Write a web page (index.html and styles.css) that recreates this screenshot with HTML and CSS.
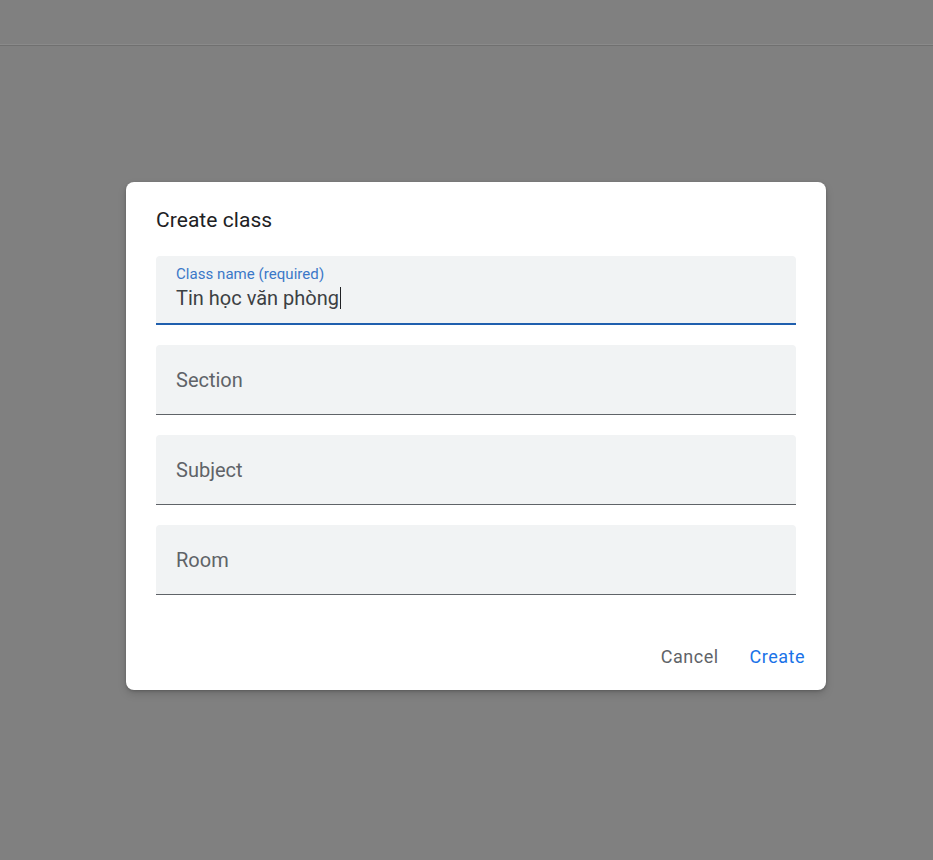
FILE: index.html
```html
<!DOCTYPE html>
<html lang="en">
<head>
<meta charset="utf-8">
<title>Create class</title>
<link rel="stylesheet" href="styles.css">
</head>
<body>
<div class="page">
  <header class="topbar"></header>
  <main class="stage">
    <div class="dialog" role="dialog" aria-labelledby="dlg-title">
      <h2 class="dialog-title" id="dlg-title">Create class</h2>
      <div class="fields">
        <div class="field field-focused">
          <span class="field-label">Class name (required)</span>
          <span class="field-value">Tin học văn phòng<span class="caret"></span></span>
        </div>
        <div class="field"><span class="field-placeholder">Section</span></div>
        <div class="field"><span class="field-placeholder">Subject</span></div>
        <div class="field"><span class="field-placeholder">Room</span></div>
      </div>
      <div class="actions">
        <button class="btn btn-cancel" type="button">Cancel</button>
        <button class="btn btn-create" type="button">Create</button>
      </div>
    </div>
  </main>
</div>
</body>
</html>
```
FILE: styles.css
```css
* { box-sizing: border-box; }
html, body { margin: 0; padding: 0; }
body {
  width: 933px;
  height: 860px;
  background: #808080;
  font-family: Roboto, "Noto Sans", "Liberation Sans", sans-serif;
  overflow: hidden;
}
.page { display: flex; flex-direction: column; height: 860px; }
.topbar {
  height: 46px;
  border-bottom: 1px solid #707070;
  box-shadow: 0 -1px 0 #8a8a8a inset;
  flex: none;
}
.stage {
  padding-top: 136px;
  padding-left: 126px;
}
.dialog {
  width: 700px;
  height: 508px;
  background: #fff;
  border-radius: 8px;
  box-shadow: 0 4px 8px rgba(0,0,0,0.15), 0 1px 3px rgba(0,0,0,0.2);
  padding: 24px 13px 15px 30px;
  display: flex;
  flex-direction: column;
}
.dialog-title {
  margin: 0;
  font-size: 21px;
  line-height: 28px;
  font-weight: 400;
  color: #202124;
  letter-spacing: 0.05px;
}
.fields {
  margin-top: 22px;
  width: 640px;
  display: flex;
  flex-direction: column;
  gap: 20px;
}
.field {
  height: 70px;
  background: #f1f3f4;
  border-radius: 4px 4px 0 0;
  border-bottom: 1px solid #5f6368;
  padding-left: 20px;
  display: flex;
  align-items: center;
}
.field-focused {
  height: 69px;
  border-bottom: 2px solid #1f5fae;
  flex-direction: column;
  align-items: flex-start;
  padding-top: 10px;
}
.field-label {
  font-size: 15px;
  line-height: 16px;
  color: #3b78c8;
  letter-spacing: 0.05px;
}
.field-value {
  margin-top: 4px;
  font-size: 20px;
  line-height: 24px;
  color: #3c4043;
  display: flex;
  align-items: center;
}
.caret {
  display: inline-block;
  width: 1px;
  height: 22px;
  background: #202124;
  margin-left: 1px;
}
.field-placeholder {
  font-size: 20px;
  line-height: 24px;
  color: #5f6368;
}
.actions {
  margin-top: auto;
  display: flex;
  justify-content: flex-end;
  gap: 15px;
}
.btn {
  background: none;
  border: none;
  font-family: Roboto, "Noto Sans", "Liberation Sans", sans-serif;
  font-size: 18px;
  line-height: 24px;
  font-weight: 400;
  padding: 6px 8px;
  cursor: pointer;
  letter-spacing: 0.5px;
}
.btn-cancel { color: #5f6368; }
.btn-create { color: #1a73e8; }
```
